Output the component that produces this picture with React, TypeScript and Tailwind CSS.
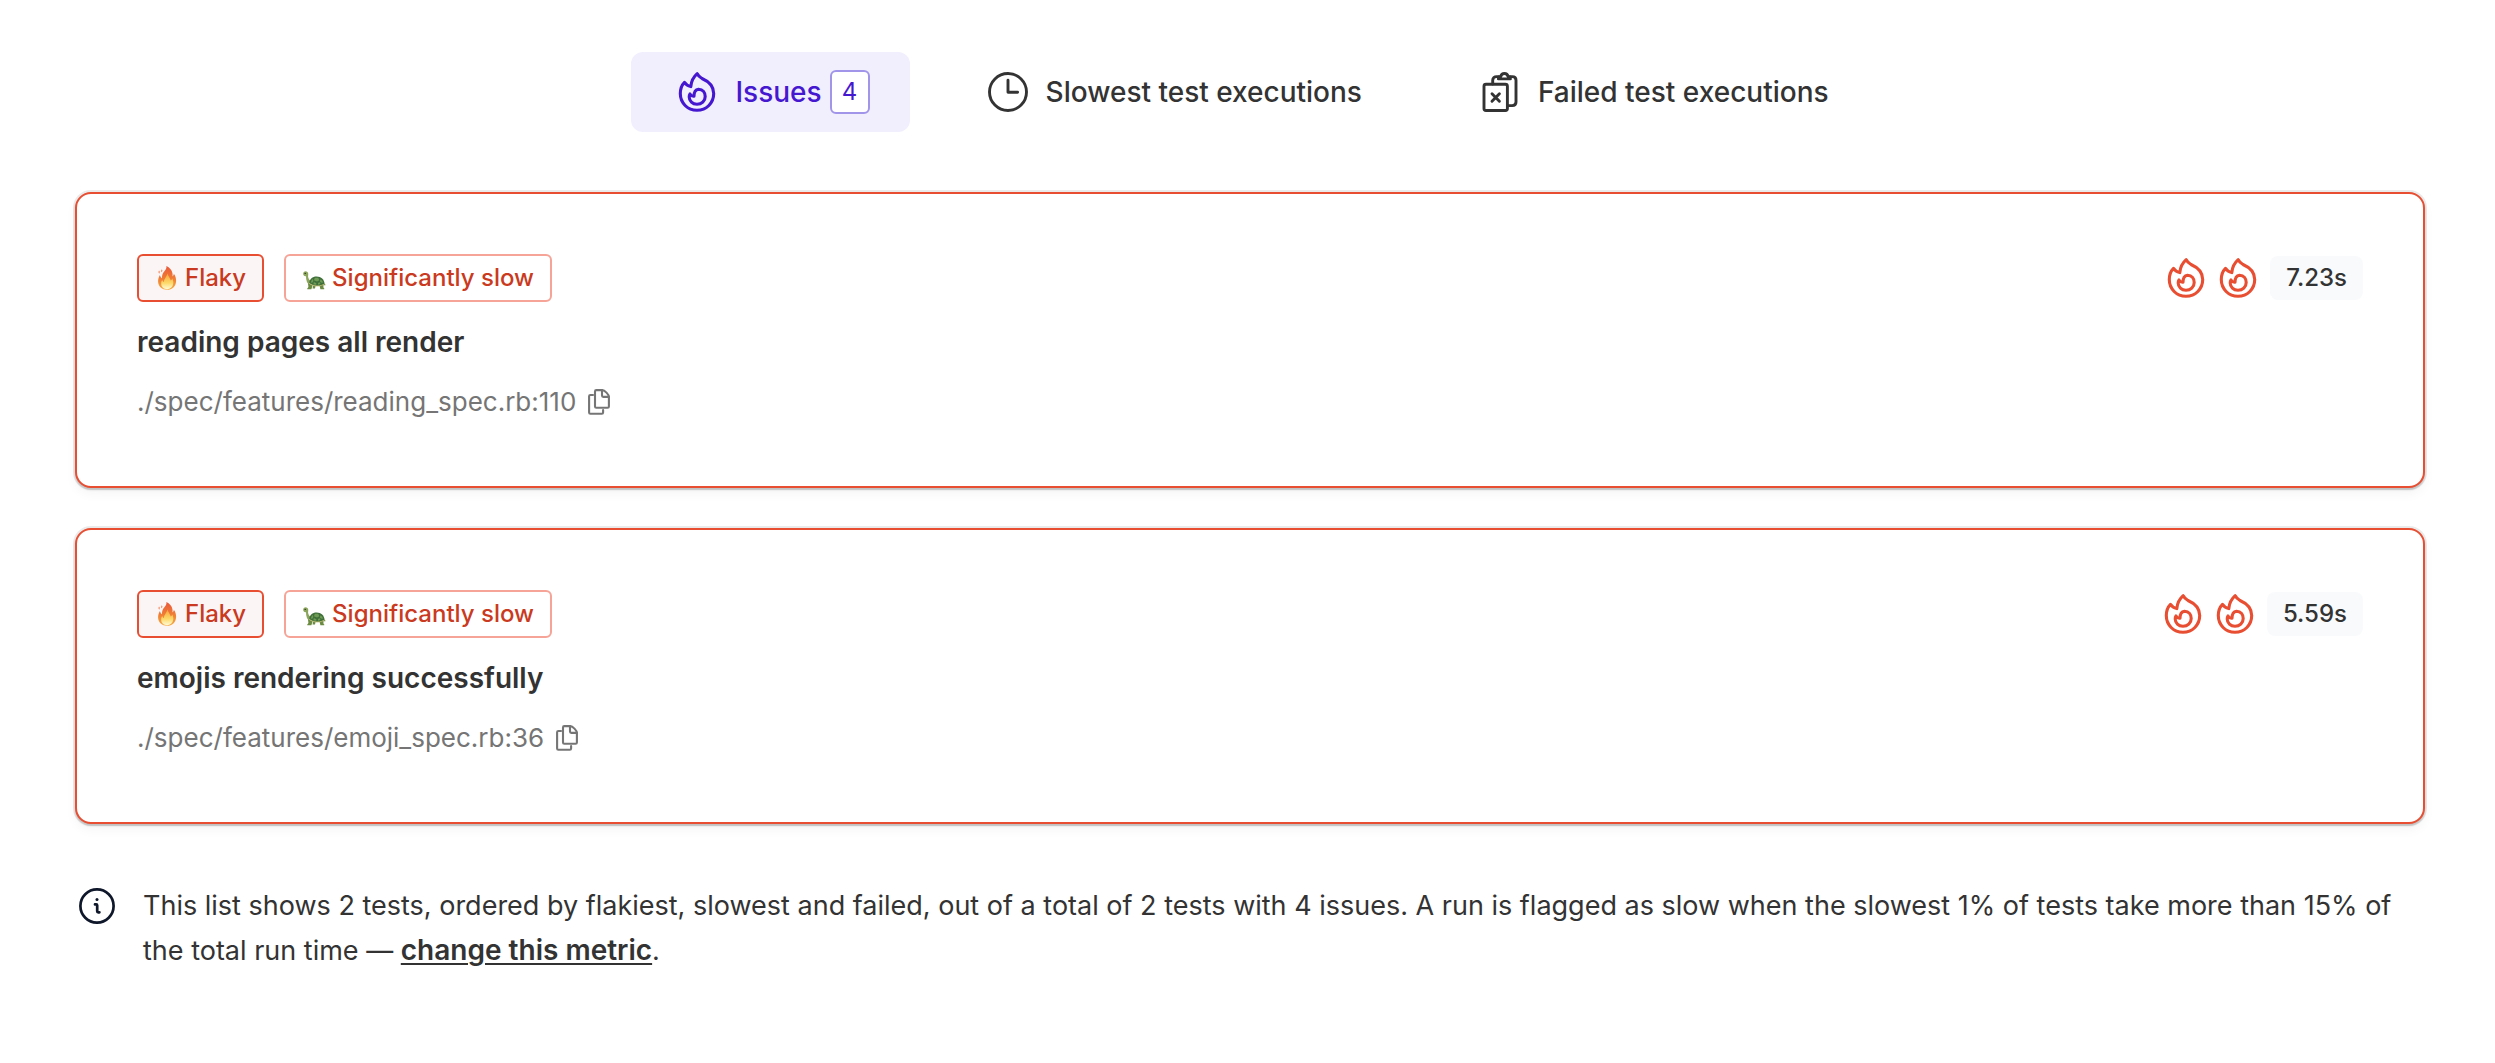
import React from "react";

function FlameIcon({ className }: { className?: string }) {
  return (
    <svg viewBox="0 0 40 40" fill="none" stroke="currentColor" strokeWidth="3.1" strokeLinecap="round" strokeLinejoin="round" className={className} aria-hidden="true">
      <path d="M13.8 14.6C14.3 9.2 16.4 5 20.2 1.7C21 3.6 22.6 5.2 25 6.5C32 9.5 36.7 14.5 36.7 21.6C36.7 31 29.4 38.3 20 38.3S3.3 31 3.3 21.6C3.3 17 4.6 13.2 7.5 10.3C8.5 12 11 13.9 13.8 14.6Z" />
      <path d="M17 24.2C17 20.8 18.5 17.6 21.5 17.2C26 17.4 28.2 20.7 28.2 24.4C28.2 29 24.5 32.3 20 32.3C15.5 32.3 12.2 29 12.2 25C12.2 23.8 12.4 22.8 13 22C14 23.6 15.3 24.4 17 24.2Z" />
    </svg>
  );
}

function ClockIcon({ className }: { className?: string }) {
  return (
    <svg viewBox="0 0 40 40" fill="none" stroke="currentColor" strokeWidth="2.9" strokeLinecap="round" strokeLinejoin="round" className={className} aria-hidden="true">
      <circle cx="20" cy="20" r="18.5" />
      <path d="M20 8.2V20.2H29.6" />
    </svg>
  );
}

function ClipboardIcon({ className }: { className?: string }) {
  return (
    <svg viewBox="0 0 40 40" fill="none" stroke="currentColor" strokeWidth="2.9" strokeLinecap="round" strokeLinejoin="round" className={className} aria-hidden="true">
      <rect x="4" y="12.3" width="23.4" height="26.2" rx="2" />
      <path d="M12 21.8L19.4 29.2M19.4 21.8L12 29.2" />
      <path d="M12.7 12V8.2C12.7 6 14.4 4.6 16.6 4.6H18.4M30.4 4.6H32.2C34.6 4.6 36 6 36 8.2V30C36 32.2 34.6 33.6 32.2 33.6H28" />
      <path d="M20.2 4.4H20.8C21.2 2.5 22.6 1.5 24.4 1.5S27.6 2.5 28 4.4H28.6C30 4.4 30.4 5.4 30.4 6.9H18.4C18.4 5.4 18.8 4.4 20.2 4.4Z" />
    </svg>
  );
}

function CopyIcon({ className }: { className?: string }) {
  return (
    <svg viewBox="0 0 22 26" fill="none" stroke="currentColor" strokeWidth="2.1" strokeLinecap="round" strokeLinejoin="round" className={className} aria-hidden="true">
      <path d="M7 2.4C7 1.7 7.6 1.1 8.3 1.1H14.4C16.6 1.1 20.9 5.6 20.9 7.8V17.4C20.9 18.1 20.3 18.7 19.6 18.7H8.3C7.6 18.7 7 18.1 7 17.4Z" />
      <path d="M14 1.4V6.6C14 7.3 14.6 7.9 15.3 7.9H20.6" />
      <path d="M5 6H2.4C1.7 6 1.1 6.6 1.1 7.3V23.4C1.1 24.1 1.7 24.7 2.4 24.7H13.8C14.5 24.7 15.1 24.1 15.1 23.4V21" />
    </svg>
  );
}

function InfoIcon({ className }: { className?: string }) {
  return (
    <svg viewBox="0 0 36 36" fill="none" stroke="currentColor" strokeWidth="2.7" strokeLinecap="round" strokeLinejoin="round" className={className} aria-hidden="true">
      <circle cx="18" cy="18" r="16.6" />
      <path d="M16 16.4H17.2C17.8 16.4 18.2 16.8 18.2 17.4V23.2C18.2 23.9 18.6 24.3 19.2 24.3H20.4" />
      <circle cx="18" cy="11.4" r="1.5" fill="currentColor" stroke="none" />
    </svg>
  );
}

function FlameEmoji() {
  return (
    <svg viewBox="0 0 24 24" className="size-6" role="img" aria-label="Fire">
      <defs>
        <linearGradient id="flame-outer" x1="0" y1="0" x2="0" y2="1">
          <stop offset="0" stopColor="#e9583a" />
          <stop offset="0.55" stopColor="#f07f35" />
          <stop offset="1" stopColor="#f7ab44" />
        </linearGradient>
        <linearGradient id="flame-inner" x1="0" y1="0" x2="0" y2="1">
          <stop offset="0" stopColor="#f9a53c" />
          <stop offset="0.6" stopColor="#fdd96a" />
          <stop offset="1" stopColor="#fffbd6" />
        </linearGradient>
      </defs>
      <path fill="url(#flame-outer)" d="M11.4 0C14.6 1.4 16.8 4 17.4 7C17.7 8.4 17.6 9.4 17.4 10.4C18.4 9.8 18.8 8.8 18.8 7.8C20.4 9.8 21.2 12.4 21.1 15C20.9 20.4 17.2 23.8 12.2 23.8C7 23.8 3.4 20.6 3.1 15.8C3 13 3.9 11 4.9 9C5.3 10.6 6 11.6 7 12.2C6.8 9.2 7.6 7.2 9.4 5.2C10.8 3.6 11.8 2 11.4 0Z" />
      <path fill="url(#flame-inner)" d="M12.2 7.6C13.2 10.2 15 12 15.8 14.6C16.6 14 17 13.2 17.1 12.4C18.2 14 18.6 16 18.2 18C17.6 21.2 15.2 23.2 12.2 23.2C8.8 23.2 6.4 21.2 6.2 18C6.1 16.2 6.6 15 7.2 14C7.6 15.2 8.2 15.8 9 16C8.8 12.8 11.8 11.6 12.2 7.6Z" />
      <path fill="#ee7a45" d="M4 4.6C4.8 5.2 5 6.6 4.2 7.8C3.4 7 3.4 5.6 4 4.6ZM6.8 3.2C7.6 4 7.6 5.2 6.6 6.2C6 5.2 6.2 4 6.8 3.2Z" />
    </svg>
  );
}

function TurtleEmoji() {
  return (
    <svg viewBox="0 0 24 24" className="size-6" role="img" aria-label="Turtle">
      <path fill="#8ba55c" d="M1.2 7.8C1.4 6 2.8 5.2 4.4 5.4C6 5.7 6.5 7 6.2 8.8C5.8 11 6.2 13.2 9 15.4L8.2 19.4C5.2 18 4 14.6 4 10.2C2.4 10.4 1.1 9.6 1.2 7.8Z" />
      <path fill="#6b8a42" d="M6 17.6L10.6 19.2L9.4 23.2H5.2C5 22.2 6.2 21.8 6.4 20.8ZM17.4 19L21.2 18L21.6 22C22.2 22.2 22.6 22.8 22.2 23.2H18.4ZM11 19.6L13.6 19.8L13 22.4H10.6ZM21 17.2C22.4 17.2 23.5 18 23.5 19.2L20.6 19.2Z" />
      <path fill="#3f6f3a" d="M7.2 17C7.6 12.8 10.4 10.4 14.6 10.4C19.2 10.4 22.2 13.4 22.6 17.8C19.4 21 11 21 7.2 17Z" />
      <path fill="#6f9c55" d="M12.8 11.8L16.2 11.8L17.4 14.2L15 15.6L12 14.2ZM9.8 14L10.8 13L11.4 15L10.2 16.8L8.7 16.6ZM18.6 13.2L20.4 15L20.9 16.8L18.8 16.6L17.9 15.2ZM11.8 16L14.4 17.2L14.2 18.8L11.4 18.4ZM16 17L17.6 16.2L18.6 18L16 18.8Z" />
      <path fill="none" stroke="#c2bd74" strokeWidth="0.9" strokeLinecap="round" d="M7.4 17.4C11 20.8 19 20.8 22.4 18" />
      <circle cx="3.2" cy="7.4" r="0.7" fill="#26301c" />
    </svg>
  );
}

type Test = { name: string; path: string; duration: string };

const tests: Test[] = [
  { name: "reading pages all render", path: "./spec/features/reading_spec.rb:110", duration: "7.23s" },
  { name: "emojis rendering successfully", path: "./spec/features/emoji_spec.rb:36", duration: "5.59s" },
];

const tabBase = "flex h-20 cursor-pointer items-center rounded-xl pl-[46px] pr-10 text-[28px] leading-10 font-medium whitespace-nowrap";
const badgeBase = "flex h-12 items-center gap-1.5 rounded-md border-2 px-4 text-2xl font-medium text-[#c93a20]";

function TestCard({ test }: { test: Test }) {
  return (
    <li className="flex items-start justify-between rounded-2xl border-2 border-[#e84e32] bg-white px-15 pt-15 pb-16 shadow-[0_0_0_2px_rgba(0,0,0,0.08),0_2px_2px_0_rgba(0,0,0,0.16),0_6px_12px_rgba(0,0,0,0.04)]">
      <div>
        <div className="flex gap-5">
          <span className={`${badgeBase} border-[#e84e32] bg-[#fcf5f6]`}>
            <FlameEmoji />
            Flaky
          </span>
          <span className={`${badgeBase} border-[#f5a497] bg-white`}>
            <TurtleEmoji />
            Significantly slow
          </span>
        </div>
        <h2 className="mt-5 text-[28px] leading-10 font-semibold">{test.name}</h2>
        <div className="mt-5 flex items-center gap-3 text-[#757575]">
          <span className="text-[26px] leading-10">{test.path}</span>
          <button type="button" aria-label={`Copy ${test.path}`} className="cursor-pointer">
            <CopyIcon className="h-[26px] w-[22px]" />
          </button>
        </div>
      </div>
      <div className="flex h-12 items-center gap-3">
        <div className="flex gap-3 text-[#e84e32]">
          <FlameIcon className="size-10" />
          <FlameIcon className="size-10" />
        </div>
        <span className="flex h-11 items-center rounded-lg bg-[#f9fafc] px-4 text-2xl font-medium">{test.duration}</span>
      </div>
    </li>
  );
}

export default function App() {
  return (
    <main className="min-h-screen bg-white pt-[52px] pr-[70px] pb-20 pl-[75px] font-['Inter',sans-serif] text-[#333333]">
      <nav aria-label="Test results" className="flex justify-center gap-8">
        <button type="button" aria-current="page" className={`${tabBase} bg-[#f1eefe] text-[#4518d0]`}>
          <FlameIcon className="mr-[18px] size-10" />
          Issues
          <span className="ml-2 flex h-11 w-10 items-center justify-center rounded-md border-2 border-[#a195ea] bg-white text-2xl font-normal">4</span>
        </button>
        <button type="button" className={tabBase}>
          <ClockIcon className="mr-[18px] size-10" />
          Slowest test executions
        </button>
        <button type="button" className={tabBase}>
          <ClipboardIcon className="mr-[18px] size-10" />
          Failed test executions
        </button>
      </nav>

      <ul className="mt-15 flex flex-col gap-10">
        {tests.map((test) => (
          <TestCard key={test.path} test={test} />
        ))}
      </ul>

      <div className="mt-15 flex items-start gap-7 pl-1">
        <InfoIcon className="mt-1 size-9 shrink-0 text-[#0f172a]" />
        <p className="text-[27px] leading-11">
          This list shows 2 tests, ordered by flakiest, slowest and failed, out of a total of 2 tests with 4 issues. A run is flagged as slow when the slowest 1% of tests take more than 15% of the total run time —{" "}
          <a href="#metric" className="text-[28px] font-semibold underline decoration-2 underline-offset-3">change this metric</a>.
        </p>
      </div>
    </main>
  );
}
